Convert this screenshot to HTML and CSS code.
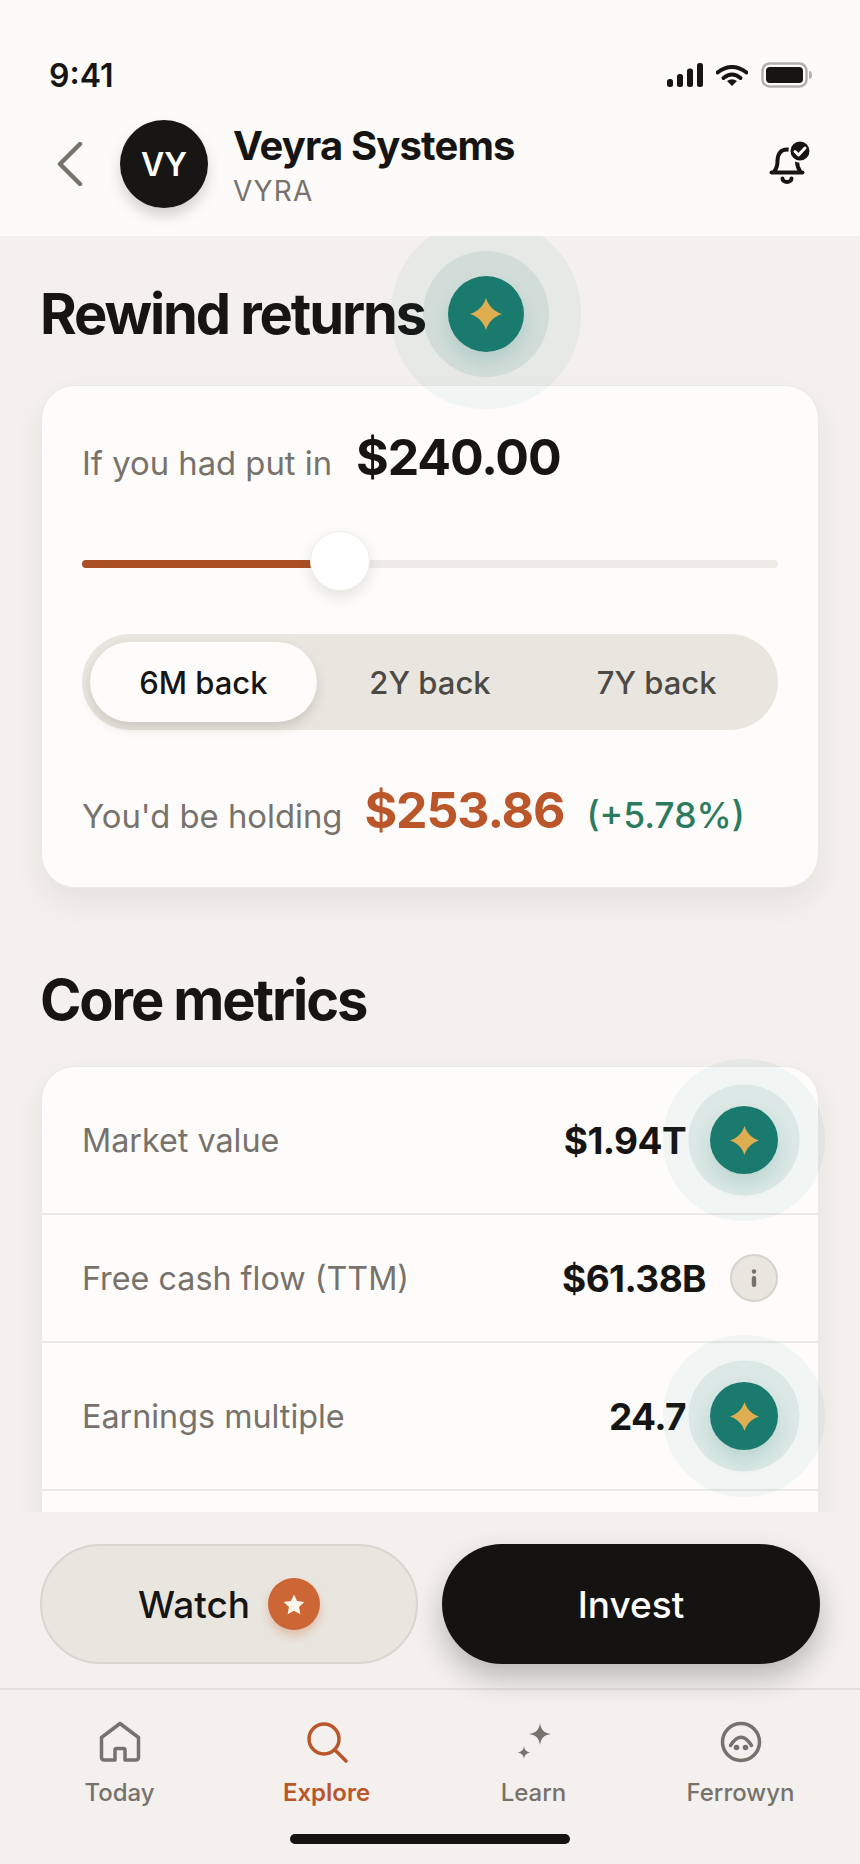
FILE: index.html
```html
<!DOCTYPE html>
<html lang="en">

<head>
    <meta charset="UTF-8">
    <meta name="viewport" content="width=device-width, initial-scale=1.0">
    <title>Veyra Systems</title>
    <link rel="stylesheet" href="styles.css">
</head>

<body>
    <div class="screen">
        <div class="header">
            <div class="status">
                <span class="time">9:41</span>
                <div class="status-icons">
                    <svg width="36" height="24" viewBox="0 0 36 24">
                        <rect x="0" y="16" width="6" height="8" rx="2.5" />
                        <rect x="10" y="11" width="6" height="13" rx="2.5" />
                        <rect x="20" y="5.5" width="6" height="18.5" rx="2.5" />
                        <rect x="30" y="0" width="6" height="24" rx="2.5" />
                    </svg>
                    <svg width="32" height="21" viewBox="0 0 32 21">
                        <path class="wifi" d="M1.5 7.5Q16 -3.5 30.500 7.500" />
                        <path class="wifi" d="M7.500 13Q16 6 24.500 13" />
                        <path d="M16 21L11 16Q16 12.500 21 16Z" />
                    </svg>
                    <svg width="51" height="26" viewBox="0 0 51 26">
                        <rect class="batt-line" x="1.500" y="1.500" width="44" height="23" rx="7" />
                        <rect x="5" y="5" width="37" height="16" rx="4" />
                        <path class="batt-nub" d="M48 9a3 4 0 0 1 3 4a3 4 0 0 1 -3 4Z" />
                    </svg>
                </div>
            </div>
            <div class="top">
                <svg class="back" width="26" height="44" viewBox="0 0 26 44">
                    <path d="M23 2L3 22L23 42" />
                </svg>
                <div class="avatar">VY</div>
                <div class="company">
                    <h1>Veyra Systems</h1>
                    <p>VYRA</p>
                </div>
                <svg class="bell" width="44" height="46" viewBox="0 0 44 46">
                    <path class="bell-line" d="M5.500 30C8 27 8.500 24 8.500 20C8.500 12.500 12 8.500 18 8.500C24 8.500 28 12.500 28 20C28 24 29 27 31 30" />
                    <path class="bell-line" d="M2.500 31.500H33.500" />
                    <path class="bell-line" d="M13.500 37.500a4.500 3.500 0 0 0 9 0" />
                    <circle class="bell-badge" cx="31" cy="10" r="10.500" />
                    <path class="bell-check" d="M26 10.500L29.500 14L36 7" />
                </svg>
            </div>
        </div>

        <div class="main">
            <div class="title-row">
                <h2>Rewind returns</h2>
                <div class="spark big">
                    <svg width="32" height="32" viewBox="0 0 32 32">
                        <path d="M16 0C18.500 8 24 13.500 32 16C24 18.500 18.500 24 16 32C13.500 24 8 18.500 0 16C8 13.500 13.500 8 16 0Z" />
                    </svg>
                </div>
            </div>

            <div class="card rewind">
                <div class="line amount">
                    <span class="muted">If you had put in</span>
                    <span class="big-number">$240.00</span>
                </div>
                <div class="slider">
                    <div class="fill"></div>
                    <div class="rest"></div>
                    <div class="thumb"></div>
                </div>
                <div class="seg">
                    <button class="active">6M back</button>
                    <button>2Y back</button>
                    <button>7Y back</button>
                </div>
                <div class="line holding">
                    <span class="muted">You'd be holding</span>
                    <span class="big-number orange">$253.86</span>
                    <span class="gain">(+5.78%)</span>
                </div>
            </div>

            <h2 class="core-title">Core metrics</h2>

            <div class="card metrics">
                <div class="row">
                    <span class="muted">Market value</span>
                    <div class="value">
                        <span>$1.94T</span>
                        <div class="spark">
                            <svg width="29" height="29" viewBox="0 0 32 32">
                                <path d="M16 0C18.500 8 24 13.500 32 16C24 18.500 18.500 24 16 32C13.500 24 8 18.500 0 16C8 13.500 13.500 8 16 0Z" />
                            </svg>
                        </div>
                    </div>
                </div>
                <div class="row">
                    <span class="muted">Free cash flow (TTM)</span>
                    <div class="value">
                        <span>$61.38B</span>
                        <div class="info">
                            <svg width="6" height="18" viewBox="0 0 6 18">
                                <circle cx="3" cy="2.500" r="2.200" />
                                <rect x="0.800" y="7" width="4.400" height="11" rx="2" />
                            </svg>
                        </div>
                    </div>
                </div>
                <div class="row">
                    <span class="muted">Earnings multiple</span>
                    <div class="value">
                        <span>24.7</span>
                        <div class="spark">
                            <svg width="29" height="29" viewBox="0 0 32 32">
                                <path d="M16 0C18.500 8 24 13.500 32 16C24 18.500 18.500 24 16 32C13.500 24 8 18.500 0 16C8 13.500 13.500 8 16 0Z" />
                            </svg>
                        </div>
                    </div>
                </div>
                <div class="row empty"></div>
            </div>
        </div>

        <div class="footer">
            <div class="actions">
                <button class="watch">
                    Watch
                    <span class="star">
                        <svg width="22" height="21" viewBox="0 0 24 23">
                            <path d="M12 0.500L15.400 7.800L23.300 8.800L17.500 14.300L19 22.200L12 18.300L5 22.200L6.500 14.300L0.700 8.800L8.600 7.800Z" />
                        </svg>
                    </span>
                </button>
                <button class="invest">Invest</button>
            </div>
            <div class="nav">
                <div class="tab">
                    <svg width="42" height="44" viewBox="0 0 42 44">
                        <path class="tab-line" d="M16 40V30a1.500 1.500 0 0 1 1.500 -1.500H24.500a1.500 1.500 0 0 1 1.500 1.500V40H37a2.500 2.500 0 0 0 2.500 -2.500V17.500L21 3.500L2.500 17.500V37.500A2.500 2.500 0 0 0 5 40Z" />
                    </svg>
                    <span>Today</span>
                </div>
                <div class="tab selected">
                    <svg width="42" height="44" viewBox="0 0 42 44">
                        <circle class="tab-line" cx="18" cy="19" r="15" />
                        <path class="tab-line" d="M29 30L40 41" />
                    </svg>
                    <span>Explore</span>
                </div>
                <div class="tab">
                    <svg width="42" height="44" viewBox="0 0 42 44">
                        <path class="tab-fill" d="M27 3C28 10 31 13 38 14C31 15 28 18 27 25C26 18 23 15 16 14C23 13 26 10 27 3Z" />
                        <path class="tab-fill" d="M11 26C11.500 30 13.500 32 17.500 32.500C13.500 33 11.500 35 11 39C10.500 35 8.500 33 4.500 32.500C8.500 32 10.500 30 11 26Z" />
                    </svg>
                    <span>Learn</span>
                </div>
                <div class="tab">
                    <svg width="42" height="44" viewBox="0 0 42 44">
                        <circle class="tab-line" cx="21" cy="22" r="18.500" />
                        <path class="tab-line" d="M10.500 25.500Q21 9 31.500 25.500" />
                        <circle class="tab-fill" cx="16.500" cy="27.500" r="2.800" />
                        <circle class="tab-fill" cx="25.500" cy="27.500" r="2.800" />
                    </svg>
                    <span>Ferrowyn</span>
                </div>
            </div>
            <div class="home-bar"></div>
        </div>
    </div>
</body>

</html>
```

FILE: styles.css
```css
/*General*/
* {
    margin: 0;
    padding: 0;
    box-sizing: border-box;
}

html {
    font-family: 'Inter', 'Liberation Sans', sans-serif;
}

body {
    background-color: #f3f0ed;
    color: #161513;
}

button {
    font-family: inherit;
    border: none;
    background: none;
    color: inherit;
}

.screen {
    width: 860px;
    height: 1864px;
    display: flex;
    flex-direction: column;
    overflow: hidden;
}

/*Header*/
.header {
    height: 236px;
    padding-top: 56px;
    background-color: #fcfbf9;
    flex-shrink: 0;
}

.status {
    display: flex;
    justify-content: space-between;
    align-items: center;
    height: 38px;
    padding: 0 48px 0 49px;
}

.time {
    font-size: 32px;
    font-weight: 600;
}

.status-icons {
    display: flex;
    align-items: center;
    gap: 13px;
    fill: #161513;
}

.wifi {
    fill: none;
    stroke: #161513;
    stroke-width: 4;
    stroke-linecap: round;
}

.batt-line {
    fill: none;
    stroke: #b2b0ac;
    stroke-width: 2.5;
}

.batt-nub {
    fill: #b2b0ac;
}

.top {
    display: flex;
    align-items: center;
    padding: 26px 47px 0 57px;
}

.back {
    fill: none;
    stroke: #77726c;
    stroke-width: 4.500;
    stroke-linecap: round;
    stroke-linejoin: round;
    margin-right: 37px;
}

.avatar {
    width: 88px;
    height: 88px;
    border-radius: 50%;
    background-color: #171614;
    color: #ffffff;
    font-size: 32px;
    font-weight: 600;
    display: flex;
    align-items: center;
    justify-content: center;
    box-shadow: 0 8px 14px rgba(0, 0, 0, 0.16);
    margin-right: 25px;
}

.company {
    flex: 1;
}

.company h1 {
    font-size: 40px;
    font-weight: 700;
    letter-spacing: -0.850px;
    line-height: 48px;
    margin-top: 2px;
}

.company p {
    font-size: 28px;
    line-height: 34px;
    letter-spacing: 1.200px;
    color: #77726c;
    margin-top: 4px;
}

.bell-line {
    fill: none;
    stroke: #161513;
    stroke-width: 4;
    stroke-linecap: round;
}

.bell-badge {
    fill: #161513;
    stroke: #fcfbf9;
    stroke-width: 2;
}

.bell-check {
    fill: none;
    stroke: #fcfbf9;
    stroke-width: 3;
    stroke-linecap: round;
    stroke-linejoin: round;
}

/*Main*/
.main {
    flex: 1;
    min-height: 0;
    overflow: hidden;
    padding: 40px 41px 0;
}

.title-row {
    display: flex;
    align-items: center;
    gap: 23px;
    margin-bottom: 33px;
}

h2 {
    font-size: 56px;
    font-weight: 700;
    letter-spacing: -2.100px;
    line-height: 64px;
    margin-left: -1px;
}

.core-title {
    margin: 80px 0 34px -1px;
}

.spark {
    position: relative;
    z-index: 1;
    width: 68px;
    height: 68px;
    flex-shrink: 0;
    border-radius: 50%;
    background-color: #1a7a6e;
    display: flex;
    align-items: center;
    justify-content: center;
    fill: #dfae50;
    box-shadow: 0 10px 18px rgba(26, 122, 110, 0.16),
        0 0 0 21.500px rgba(26, 122, 110, 0.1),
        0 0 0 47px rgba(26, 122, 110, 0.05);
}

.spark.big {
    width: 76px;
    height: 76px;
    box-shadow: 0 10px 18px rgba(26, 122, 110, 0.16),
        0 0 0 25px rgba(26, 122, 110, 0.1),
        0 0 0 57px rgba(26, 122, 110, 0.05);
}

.card {
    background-color: #fdfcfa;
    border: 1px solid #ebe9e5;
    border-radius: 34px;
    box-shadow: 0 14px 30px rgba(60, 50, 40, 0.07);
}

.muted {
    color: #77726c;
    font-size: 32.800px;
}

/*Rewind card*/
.rewind {
    padding: 41px 40px 41px;
}

.line {
    display: flex;
    align-items: baseline;
    line-height: 60px;
}

.amount {
    gap: 24px;
}

.holding {
    margin-top: 50px;
    gap: 22px;
}

.big-number {
    font-size: 50px;
    font-weight: 700;
    letter-spacing: -1.100px;
}

.orange {
    color: #bb562a;
}

.gain {
    font-size: 35.500px;
    font-weight: 500;
    color: #2d7b5f;
}

.slider {
    position: relative;
    display: flex;
    height: 60px;
    margin-top: 38px;
    padding-top: 29px;
}

.fill {
    width: 232px;
    height: 8px;
    background-color: #ab4f25;
    border-radius: 4px 0 0 4px;
}

.rest {
    flex: 1;
    height: 8px;
    background-color: #eeebe6;
    border-radius: 0 4px 4px 0;
}

.thumb {
    position: absolute;
    left: 228px;
    top: 0;
    width: 60px;
    height: 60px;
    border-radius: 50%;
    background-color: #ffffff;
    border: 1px solid #f0eeea;
    box-shadow: 0 6px 14px rgba(60, 50, 40, 0.12);
}

.seg {
    display: grid;
    grid-template-columns: repeat(3, 1fr);
    height: 96px;
    margin-top: 43px;
    padding: 8px;
    border-radius: 48px;
    background-color: #e9e6e0;
}

.seg button {
    font-size: 31px;
    font-weight: 500;
    color: #4d4a45;
    border-radius: 40px;
}

.seg .active {
    background-color: #fdfcfa;
    color: #161513;
    box-shadow: 0 6px 12px rgba(60, 50, 40, 0.16);
}

/*Metrics card*/
.metrics {
    border-bottom: none;
    border-radius: 34px 34px 0 0;
    padding-bottom: 60px;
}

.row {
    display: flex;
    justify-content: space-between;
    align-items: center;
    padding: 39px 40px;
    border-bottom: 2px solid #ebe9e5;
}

.row.empty {
    height: 60px;
    border-bottom: none;
}

.row .muted {
    font-size: 32.300px;
}

.value {
    display: flex;
    align-items: center;
    gap: 24px;
    font-size: 37px;
    font-weight: 700;
    letter-spacing: -0.600px;
}

.info {
    width: 48px;
    height: 48px;
    border-radius: 50%;
    background-color: #e9e6e0;
    border: 2px solid #d5d3ce;
    display: flex;
    align-items: center;
    justify-content: center;
    fill: #77726c;
}

/*Footer*/
.footer {
    flex-shrink: 0;
}

.actions {
    display: grid;
    grid-template-columns: 1fr 1fr;
    gap: 24px;
    padding: 32px 40px 24px;
}

.actions button {
    height: 120px;
    border-radius: 60px;
    font-size: 37px;
    font-weight: 500;
    display: flex;
    align-items: center;
    justify-content: center;
}

.watch {
    background-color: #e9e6e0;
    border: 2px solid #d9d6d0;
    gap: 18px;
}

.star {
    width: 52px;
    height: 52px;
    border-radius: 50%;
    background-color: #cc6635;
    display: flex;
    align-items: center;
    justify-content: center;
    fill: #fdf5ea;
    box-shadow: 0 6px 10px rgba(204, 102, 53, 0.3);
}

.actions .invest {
    background-color: #141311;
    color: #ffffff;
    box-shadow: 0 14px 28px rgba(20, 19, 17, 0.25);
}

.nav {
    display: grid;
    grid-template-columns: repeat(4, 1fr);
    padding: 30px 16px 0;
    border-top: 2px solid #e3e0db;
}

.tab {
    display: flex;
    flex-direction: column;
    align-items: center;
    gap: 14px;
    color: #77726c;
    font-size: 24px;
    font-weight: 500;
    line-height: 30px;
}

.tab.selected {
    color: #bb562a;
    font-weight: 600;
}

.tab-line {
    fill: none;
    stroke: currentColor;
    stroke-width: 3.500;
    stroke-linecap: round;
    stroke-linejoin: round;
}

.tab-fill {
    fill: currentColor;
}

.home-bar {
    width: 280px;
    height: 10px;
    margin: 26px auto 20px;
    border-radius: 5px;
    background-color: #141311;
}
```
